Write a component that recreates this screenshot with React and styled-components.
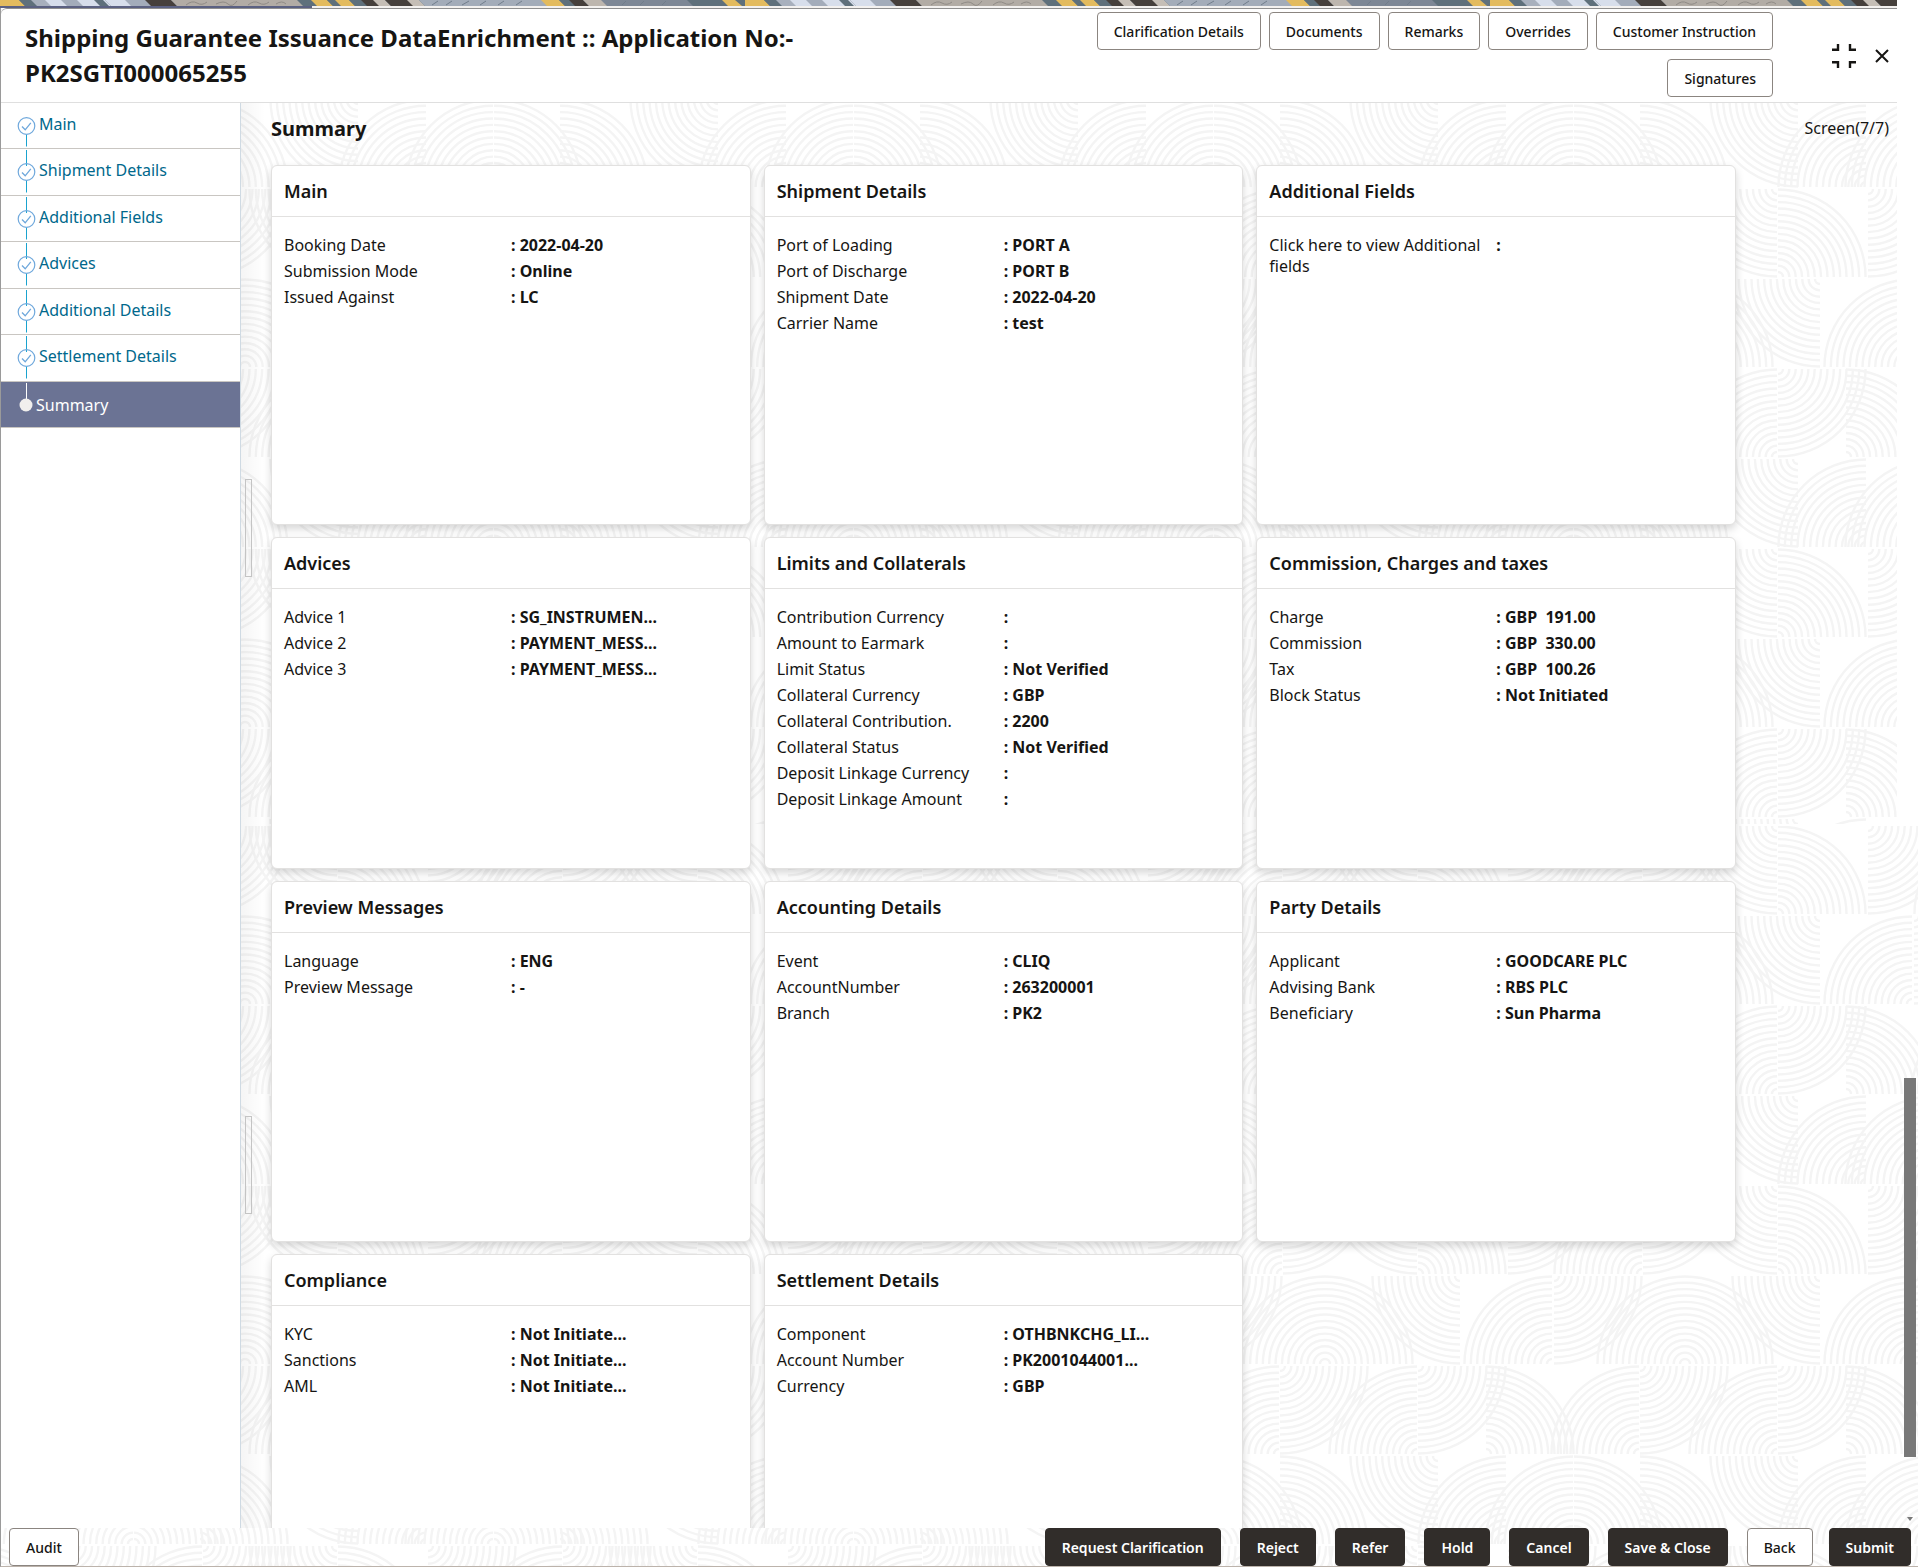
import styled, { createGlobalStyle } from "styled-components";

const GlobalStyle = createGlobalStyle`
  * {
    box-sizing: border-box;
  }

  body {
    margin: 0;
    background: #fff;
    color: #161513;
    font-family: "Noto Sans", "Open Sans", sans-serif;
    font-size: 16px;
  }

  button {
    font-family: inherit;
    cursor: pointer;
  }
`;

const Page = styled.div`
  position: relative;
  display: flex;
  flex-direction: column;
  height: 100vh;
  min-width: 1280px;
  overflow: hidden;
`;

const Texture = styled.svg`
  position: absolute;
  inset: 0;
  z-index: -1;
  width: 100%;
  height: 100%;

  .upper {
    width: calc(100% - 21px);
  }
`;

const TopStrip = styled.div`
  flex: none;
  height: 8px;
  margin-right: 21px;
  background: linear-gradient(to right, #5b6182 312px, #f3f1ef 312px);

  svg {
    display: block;
    width: 100%;
    height: 6px;
  }
`;

const Dialog = styled.div`
  flex: 1;
  min-height: 0;
  display: flex;
  flex-direction: column;
  border-left: 1px solid #9a9a9a;
  border-bottom: 1px solid #bcb3ab;
`;

const Header = styled.header`
  flex: none;
  background: #fff;
  border-top-left-radius: 6px;
`;

const HeaderInner = styled.div`
  display: flex;
  justify-content: space-between;
  margin-right: 21px;
  padding: 3px 8px 5px 24px;
  border-top: 1px solid #8f8f8f;
  border-bottom: 1px solid #dfdfdf;
  border-top-left-radius: 6px;
`;

const Title = styled.h1`
  width: 820px;
  margin: 8px 0 0;
  font-size: 24px;
  line-height: 35px;
  font-weight: 700;
`;

const HeaderActions = styled.div`
  display: flex;
  gap: 59px;
`;

const ActionList = styled.div`
  display: flex;
  flex-wrap: wrap;
  justify-content: flex-end;
  gap: 9px 8px;
  width: 700px;
`;

const WindowControls = styled.div`
  display: flex;
  align-items: flex-start;
  padding-top: 32px;
  gap: 19px;
`;

const IconButton = styled.button`
  display: flex;
  align-items: center;
  height: 24px;
  padding: 0;
  border: 0;
  background: none;
`;

const Button = styled.button`
  height: 38px;
  padding: 0 16px;
  border: 1px solid ${(props) => (props.$solid ? "#312d2a" : "#8b8580")};
  border-radius: 4px;
  background: ${(props) => (props.$solid ? "#312d2a" : "#fff")};
  color: ${(props) => (props.$solid ? "#fff" : "#161513")};
  font-size: 14px;
  font-weight: ${(props) => (props.$solid ? 600 : 500)};
  white-space: nowrap;
`;

const Body = styled.div`
  position: relative;
  flex: 1;
  min-height: 0;
  display: flex;
`;

const Sidebar = styled.nav`
  flex: none;
  width: 240px;
  background: #fff;
  border-right: 1px solid #cfdae3;
`;

const StepList = styled.ol`
  display: flex;
  flex-direction: column;
  height: 325px;
  margin: 0;
  padding: 0;
  list-style: none;
`;

const Step = styled.li`
  flex: 1;
  min-height: 0;
  display: flex;
  overflow: hidden;
  border-bottom: 1px solid #c9c6c2;
  background: ${(props) => (props.$active ? "#6b7394" : "transparent")};
`;

const StepLink = styled.a`
  flex: 1;
  display: flex;
  gap: 3px;
  padding-left: 16px;
  color: ${(props) => (props.$active ? "#fff" : "#00688c")};
  line-height: ${(props) => (props.$active ? 46 : 42)}px;
  text-decoration: none;

  svg {
    flex: none;
  }
`;

const Content = styled.main`
  position: relative;
  flex: 1;
  min-width: 0;
  padding: 0 29px 0 30px;
  overflow: hidden;
  background: linear-gradient(to right, rgba(0, 0, 0, 0.04), transparent 24px);
`;

const ContentHead = styled.div`
  display: flex;
  justify-content: space-between;
  align-items: center;
  height: 50px;
  margin-bottom: 12px;
`;

const SectionTitle = styled.h2`
  margin: 0;
  font-size: 20px;
  font-weight: 700;
`;

const Grid = styled.div`
  display: grid;
  grid-template-columns: repeat(3, 1fr);
  grid-template-rows: 360px 332px 361px 361px;
  gap: 12px 13px;
  margin-right: 153px;
`;

const Card = styled.section`
  background: #fff;
  border: 1px solid #e2e1e0;
  border-radius: 6px;
  box-shadow: 0 4px 8px rgba(0, 0, 0, 0.16);
`;

const CardTitle = styled.h3`
  margin: 0;
  padding: 0 12px;
  border-bottom: 1px solid #e2e1e0;
  font-size: 18px;
  line-height: 50px;
  font-weight: 600;
`;

const Fields = styled.dl`
  display: flex;
  flex-direction: column;
  gap: 5px;
  margin: 0;
  padding: 18px 12px;
`;

const Field = styled.div`
  display: grid;
  grid-template-columns: 227px 1fr;
  line-height: 21px;

  dt {
    padding-right: 8px;
  }

  dd {
    margin: 0;
    font-weight: 700;
    white-space: pre;
  }
`;

const Splitter = styled.div`
  position: absolute;
  left: 4px;
  top: ${(props) => props.$top}px;
  width: 7px;
  height: 98px;
  border: 1px solid #c4c4c4;
`;

const ScrollThumb = styled.div`
  position: absolute;
  right: 2px;
  top: 975px;
  width: 12px;
  height: 379px;
  background: #787878;
`;

const ScrollArrow = styled.svg`
  position: absolute;
  right: 5px;
  bottom: 7px;
`;

const Footer = styled.footer`
  flex: none;
  display: flex;
  justify-content: space-between;
  padding: 0 7px 0 8px;
`;

const FooterActions = styled.div`
  display: flex;
  gap: 19px;
`;

const FooterEnd = styled.div`
  display: flex;
  gap: 16px;
`;

const headerActions = [
  "Clarification Details",
  "Documents",
  "Remarks",
  "Overrides",
  "Customer Instruction",
  "Signatures",
];

const footerActions = [
  "Request Clarification",
  "Reject",
  "Refer",
  "Hold",
  "Cancel",
  "Save & Close",
];

const steps = [
  "Main",
  "Shipment Details",
  "Additional Fields",
  "Advices",
  "Additional Details",
  "Settlement Details",
  "Summary",
];

const cards = [
  {
    title: "Main",
    fields: [
      ["Booking Date", "2022-04-20"],
      ["Submission Mode", "Online"],
      ["Issued Against", "LC"],
    ],
  },
  {
    title: "Shipment Details",
    fields: [
      ["Port of Loading", "PORT A"],
      ["Port of Discharge", "PORT B"],
      ["Shipment Date", "2022-04-20"],
      ["Carrier Name", "test"],
    ],
  },
  {
    title: "Additional Fields",
    fields: [["Click here to view Additional fields", ""]],
  },
  {
    title: "Advices",
    fields: [
      ["Advice 1", "SG_INSTRUMEN..."],
      ["Advice 2", "PAYMENT_MESS..."],
      ["Advice 3", "PAYMENT_MESS..."],
    ],
  },
  {
    title: "Limits and Collaterals",
    fields: [
      ["Contribution Currency", ""],
      ["Amount to Earmark", ""],
      ["Limit Status", "Not Verified"],
      ["Collateral Currency", "GBP"],
      ["Collateral Contribution.", "2200"],
      ["Collateral Status", "Not Verified"],
      ["Deposit Linkage Currency", ""],
      ["Deposit Linkage Amount", ""],
    ],
  },
  {
    title: "Commission, Charges and taxes",
    fields: [
      ["Charge", "GBP  191.00"],
      ["Commission", "GBP  330.00"],
      ["Tax", "GBP  100.26"],
      ["Block Status", "Not Initiated"],
    ],
  },
  {
    title: "Preview Messages",
    fields: [
      ["Language", "ENG"],
      ["Preview Message", "-"],
    ],
  },
  {
    title: "Accounting Details",
    fields: [
      ["Event", "CLIQ"],
      ["AccountNumber", "263200001"],
      ["Branch", "PK2"],
    ],
  },
  {
    title: "Party Details",
    fields: [
      ["Applicant", "GOODCARE PLC"],
      ["Advising Bank", "RBS PLC"],
      ["Beneficiary", "Sun Pharma"],
    ],
  },
  {
    title: "Compliance",
    fields: [
      ["KYC", "Not Initiate..."],
      ["Sanctions", "Not Initiate..."],
      ["AML", "Not Initiate..."],
    ],
  },
  {
    title: "Settlement Details",
    fields: [
      ["Component", "OTHBNKCHG_LI..."],
      ["Account Number", "PK2001044001..."],
      ["Currency", "GBP"],
    ],
  },
];

// [x, row, quadrant]: ringed quarter circles on a 360px repeat, four 90px rows
const quarters = [
  [75, 0, "tl"], [75, 0, "tr"], [210, 0, "bl"], [302, 0, "tl"], [304, 0, "br"],
  [29, 1, "tl"], [30, 1, "br"], [167, 1, "tl"], [168, 1, "br"], [236, 1, "tr"],
  [30, 2, "tr"], [188, 2, "bl"], [256, 2, "tl"], [323, 2, "tl"], [324, 2, "tr"],
  [32, 3, "tl"], [33, 3, "br"], [167, 3, "bl"], [168, 3, "tr"], [258, 3, "br"],
];

const RINGS = 14;

const quarterPath = (x, row, quadrant) => {
  const dx = quadrant[1] === "l" ? -1 : 1;
  const dy = quadrant[0] === "t" ? -1 : 1;
  const y = row * 90 + (dy === -1 ? 89 : 1);
  const sweep = dx === dy ? 0 : 1;
  let d = "";
  for (let i = 0; i < RINGS; i++) {
    const r = 5 + i * 6.35;
    d += `M${x} ${y + dy * r}A${r} ${r} 0 0 ${sweep} ${x + dx * r} ${y}`;
  }
  return d;
};

const RingPattern = ({ id, y }) => (
  <pattern id={id} width="360" height="360" x="170" y={y} patternUnits="userSpaceOnUse">
    {[-360, 0, 360].map((shift) =>
      quarters.map(([x, row, quadrant]) => (
        <path
          key={`${shift}-${x}-${row}-${quadrant}`}
          d={quarterPath(x + shift, row, quadrant)}
          fill="none"
          stroke="#f4f4f4"
          strokeWidth="2.4"
        />
      ))
    )}
  </pattern>
);

const Background = () => (
  <Texture aria-hidden="true">
    <defs>
      <RingPattern id="ringsUpper" y="278" />
      <RingPattern id="ringsLower" y="195" />
    </defs>
    <rect className="upper" y="0" height="824" fill="url(#ringsUpper)" />
    <rect y="826" width="100%" height="100%" fill="url(#ringsLower)" />
  </Texture>
);

// [from, to, colour] of each slanted band of the ribbon
const bands = [
  [-14, 22, "#e3bb5e"], [22, 38, "#5f707b"], [34, 50, "#a8b0bd"],
  [48, 68, "#d7deeb"], [64, 84, "#a3acba"], [80, 108, "#d7deeb"],
  [97, 106, "#5f707b"], [108, 132, "#d7deeb"], [128, 150, "#a3acba"],
  [148, 174, "#46403c"], [174, 302, "#b2aca5"], [300, 316, "#5f707b"],
  [314, 330, "#e3bb5e"], [330, 340, "#5f707b"], [338, 352, "#e3bb5e"],
  [352, 366, "#5f707b"], [364, 378, "#46403c"], [376, 388, "#c5beb6"],
  [388, 412, "#46403c"], [410, 422, "#c5beb6"], [422, 546, "#a3acb9"],
  [544, 562, "#e3bb5e"], [562, 574, "#5f707b"], [572, 586, "#46403c"],
  [586, 606, "#bdb6ae"], [604, 692, "#7d8795"], [690, 726, "#5f707b"],
];

const Ribbon = () => (
  <svg aria-hidden="true">
    <defs>
      <pattern id="ribbon" width="745" height="6" patternUnits="userSpaceOnUse">
        <rect width="745" height="6" fill="#5f707b" />
        {bands.map(([from, to, colour]) => (
          <path key={from} d={`M${from - 3} 0H${to - 3}L${to + 3} 6H${from + 3}Z`} fill={colour} />
        ))}
        <path d="M722 0H735L742 6H728Z" fill="#e3bb5e" />
        <path
          d="M186 5q6 -5 11 -2t10 -1M216 4q8 -4 12 0t9 -3M248 5q6 -5 11 -2t10 -1M276 4q6 -4 10 0"
          fill="none"
          stroke="#8f8a85"
        />
        <path
          d="M432 5l6 -4M446 5l6 -4M462 5l7 -4M480 5l6 -4M498 5l6 -4M516 5l6 -4M622 5l4 -4M640 5l4 -4M662 5l4 -4"
          stroke="#717d8b"
        />
      </pattern>
    </defs>
    <rect width="100%" height="6" fill="url(#ribbon)" />
  </svg>
);

const StepIcon = ({ first, active }) => {
  if (active) {
    return (
      <svg width="16" height="46" viewBox="0 0 16 46" aria-hidden="true">
        <path d="M9.5 1v16" stroke="#fff" />
        <circle cx="9" cy="23" r="6.5" fill="#f1efed" />
      </svg>
    );
  }
  return (
    <svg width="19" height="46" viewBox="0 0 19 46" fill="none" aria-hidden="true">
      {!first && <path d="M9.5 1v16" stroke="#1aa3cf" />}
      <path d="M9.5 31.5v12" stroke="#1aa3cf" />
      <circle cx="9.5" cy="23" r="8.3" stroke="#6fa8dc" strokeWidth="1.2" />
      <path d="M5 23.5l3.2 3.3 5.6 -7" stroke="#6fa8dc" strokeWidth="1.3" />
    </svg>
  );
};

const CollapseIcon = () => (
  <svg width="24" height="24" viewBox="0 0 24 24" fill="none" stroke="#161513" strokeWidth="2.4" aria-hidden="true">
    <path d="M0 5.8H6V0M18 0V5.8H24M0 18.2H6V24M18 24V18.2H24" />
  </svg>
);

const CloseIcon = () => (
  <svg width="14" height="14" viewBox="0 0 14 14" fill="none" stroke="#161513" strokeWidth="2" aria-hidden="true">
    <path d="M1 1L13 13M13 1L1 13" />
  </svg>
);

const SummaryCard = ({ title, fields }) => (
  <Card>
    <CardTitle>{title}</CardTitle>
    <Fields>
      {fields.map(([label, value]) => (
        <Field key={label}>
          <dt>{label}</dt>
          <dd>: {value}</dd>
        </Field>
      ))}
    </Fields>
  </Card>
);

const App = () => {
  return (
    <Page>
      <GlobalStyle />
      <Background />
      <TopStrip>
        <Ribbon />
      </TopStrip>
      <Dialog>
        <Header>
          <HeaderInner>
            <Title>
              Shipping Guarantee Issuance DataEnrichment :: Application No:- PK2SGTI000065255
            </Title>
            <HeaderActions>
              <ActionList>
                {headerActions.map((label) => (
                  <Button key={label}>{label}</Button>
                ))}
              </ActionList>
              <WindowControls>
                <IconButton aria-label="Collapse">
                  <CollapseIcon />
                </IconButton>
                <IconButton aria-label="Close">
                  <CloseIcon />
                </IconButton>
              </WindowControls>
            </HeaderActions>
          </HeaderInner>
        </Header>
        <Body>
          <Sidebar>
            <StepList>
              {steps.map((label, index) => {
                const active = label === "Summary";
                return (
                  <Step key={label} $active={active}>
                    <StepLink href="#" $active={active}>
                      <StepIcon first={index === 0} active={active} />
                      {label}
                    </StepLink>
                  </Step>
                );
              })}
            </StepList>
          </Sidebar>
          <Content>
            <Splitter $top={376} />
            <Splitter $top={1013} />
            <ContentHead>
              <SectionTitle>Summary</SectionTitle>
              <span>Screen(7/7)</span>
            </ContentHead>
            <Grid>
              {cards.map((card) => (
                <SummaryCard key={card.title} title={card.title} fields={card.fields} />
              ))}
            </Grid>
          </Content>
          <ScrollThumb />
          <ScrollArrow width="6" height="4" viewBox="0 0 6 4" aria-hidden="true">
            <path d="M0 0H6L3 4Z" fill="#787878" />
          </ScrollArrow>
        </Body>
        <Footer>
          <Button>Audit</Button>
          <FooterActions>
            {footerActions.map((label) => (
              <Button key={label} $solid>
                {label}
              </Button>
            ))}
            <FooterEnd>
              <Button>Back</Button>
              <Button $solid>Submit</Button>
            </FooterEnd>
          </FooterActions>
        </Footer>
      </Dialog>
    </Page>
  );
};

export default App;
